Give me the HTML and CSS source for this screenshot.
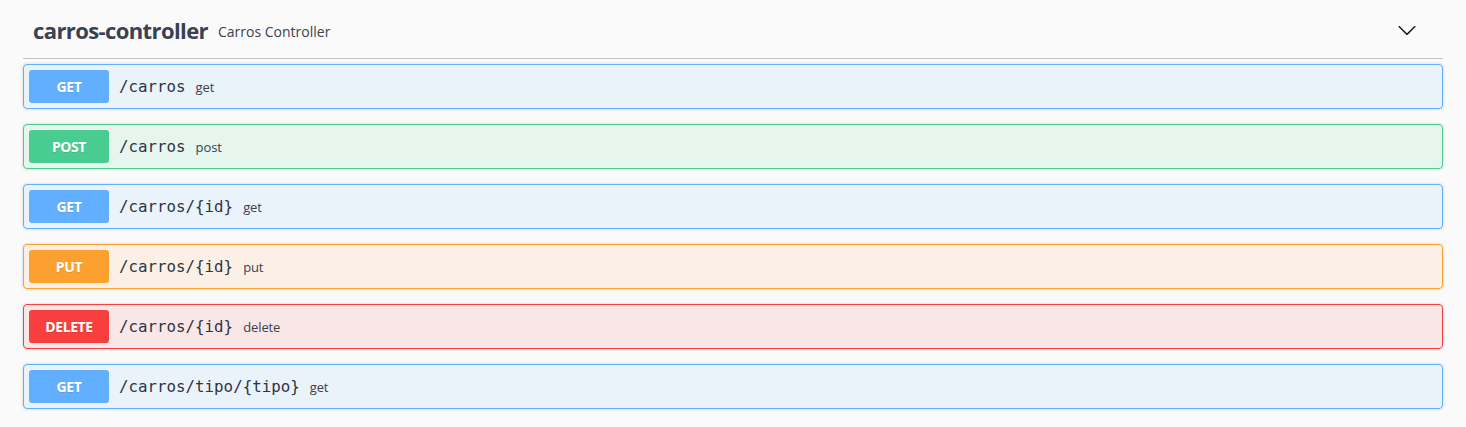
FILE: index.html
```html
<!DOCTYPE html>
<html lang="pt">
<head>
<meta charset="utf-8">
<title>carros-controller</title>
<link rel="stylesheet" href="styles.css">
</head>
<body>
<div class="wrapper">
  <section class="tag-section">
    <h4 class="opblock-tag">
      <span class="tag-name">carros-controller</span>
      <small class="tag-desc">Carros Controller</small>
      <span class="tag-spacer"></span>
      <button class="expand" aria-label="collapse">
        <svg width="20" height="20" viewBox="0 0 20 20"><path d="M17.418 6.109c.272-.268.709-.268.979 0s.271.701 0 .969l-7.908 7.83c-.27.268-.707.268-.979 0l-7.908-7.830c-.27-.268-.27-.701 0-.969.271-.268.709-.268.979 0L10 13.25l7.418-7.141z" fill="#1b1b1b"/></svg>
      </button>
    </h4>
    <div class="opblock get"><div class="summary"><span class="method">GET</span><span class="path">/carros</span><span class="desc">get</span></div></div>
    <div class="opblock post"><div class="summary"><span class="method">POST</span><span class="path">/carros</span><span class="desc">post</span></div></div>
    <div class="opblock get"><div class="summary"><span class="method">GET</span><span class="path">/carros/{id}</span><span class="desc">get</span></div></div>
    <div class="opblock put"><div class="summary"><span class="method">PUT</span><span class="path">/carros/{id}</span><span class="desc">put</span></div></div>
    <div class="opblock delete"><div class="summary"><span class="method">DELETE</span><span class="path">/carros/{id}</span><span class="desc">delete</span></div></div>
    <div class="opblock get"><div class="summary"><span class="method">GET</span><span class="path">/carros/tipo/{tipo}</span><span class="desc">get</span></div></div>
  </section>
</div>
</body>
</html>
```
FILE: styles.css
```css
html, body {
  margin: 0;
  padding: 0;
  background: #fafafa;
}
body {
  font-family: "Open Sans", "Noto Sans", sans-serif;
  color: #3b4151;
}
.wrapper {
  padding: 0 23px;
}
.tag-section {
  width: 1420px;
}
.opblock-tag {
  display: flex;
  align-items: center;
  height: 59px;
  box-sizing: border-box;
  margin: 0 0 5px;
  padding: 2px 20px 0 10px;
  border-bottom: 1px solid rgba(59, 65, 81, 0.3);
  font-weight: normal;
}
.tag-name {
  font-size: 22px;
  font-weight: 700;
  letter-spacing: -0.6px;
  color: #3b4151;
}
.tag-desc {
  font-size: 14px;
  margin-left: 10px;
  padding-top: 3px;
  color: #3b4151;
  letter-spacing: 0;
}
.tag-spacer {
  flex: 1;
}
.expand {
  border: none;
  background: none;
  padding: 0;
  margin-right: 6px;
  width: 20px;
  height: 20px;
  display: flex;
}
.opblock {
  margin: 0 0 15px;
  border: 1px solid;
  border-radius: 4px;
  box-shadow: 0 0 3px rgba(0, 0, 0, 0.19);
}
.summary {
  display: flex;
  align-items: center;
  padding: 5px;
}
.method {
  min-width: 80px;
  box-sizing: border-box;
  padding: 6px 15px;
  border-radius: 3px;
  text-align: center;
  color: #fff;
  font-size: 14px;
  font-weight: 700;
  letter-spacing: -0.4px;
  line-height: 21px;
  text-shadow: 0 1px 0 rgba(0, 0, 0, 0.1);
}
.path {
  padding: 0 10px;
  font-family: "DejaVu Sans Mono", monospace;
  font-size: 15.8px;
  font-weight: normal;
  color: #2f3442;
}
.desc {
  font-size: 13px;
  color: #3b4151;
  letter-spacing: -0.1px;
}
.get { border-color: #61affe; background: rgba(97, 175, 254, 0.1); }
.get .method { background: #61affe; }
.post { border-color: #49cc90; background: rgba(73, 204, 144, 0.1); }
.post .method { background: #49cc90; }
.put { border-color: #fca130; background: rgba(252, 161, 48, 0.1); }
.put .method { background: #fca130; }
.delete { border-color: #f93e3e; background: rgba(249, 62, 62, 0.1); }
.delete .method { background: #f93e3e; }
```
